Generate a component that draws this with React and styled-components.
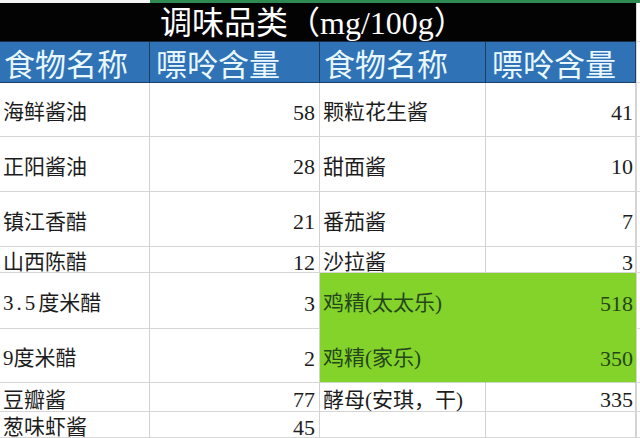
import React from "react";
import styled, { createGlobalStyle, css } from "styled-components";

const Global = createGlobalStyle`
  html, body { margin: 0; padding: 0; background: #fff; overflow: hidden; }
  body { width: 640px; height: 438px; }
`;

const GREEN = "#83d32b";

const rows = [
  { h: 54, a: ["海鲜酱油", "58"], b: ["颗粒花生酱", "41"] },
  { h: 55, a: ["正阳酱油", "28"], b: ["甜面酱", "10"] },
  { h: 55, a: ["镇江香醋", "21"], b: ["番茄酱", "7"] },
  { h: 26, a: ["山西陈醋", "12"], b: ["沙拉酱", "3"] },
  { h: 56, a: ["3.5度米醋", "3"], b: ["鸡精(太太乐)", "518"], green: true },
  { h: 54, a: ["9度米醋", "2"], b: ["鸡精(家乐)", "350"], green: true },
  { h: 29, a: ["豆瓣酱", "77"], b: ["酵母(安琪，干)", "335"] },
  { h: 26, a: ["葱味虾酱", "45"], b: ["", ""] },
];

const Sheet = styled.div`
  display: grid;
  grid-template-columns: 150px 170px 166px 150px 1fr;
  grid-template-rows: 3px 39px 41px ${(p) => p.$rows};
  width: 640px;
  height: 438px;
  overflow: hidden;
  background: #fff;
`;

const TopStrip = styled.div`
  grid-column: ${(p) => p.$span};
  background: ${(p) => (p.$green ? "#2f8a52" : "#f4f4f4")};
`;

const TitleBar = styled.div`
  grid-column: 1 / 5;
  background: #030303;
  border-bottom: 1px solid #1b2d44;
  box-sizing: border-box;
  display: flex;
  align-items: center;
  padding: 1px 0 0 160px;
  color: #ffffff;
  font-family: "Liberation Serif", "Noto Sans CJK SC", serif;
  font-size: 32px;
  line-height: 1;
  white-space: nowrap;
`;

const SpareCell = styled.div`
  box-sizing: border-box;
  border-left: 1px solid #d6d6d6;
  border-bottom: 1px solid #dcdcdc;
  background: #fff;
`;

const HeadCell = styled.div`
  box-sizing: border-box;
  background: #2f73b6;
  border-right: 1px solid #1d3f66;
  border-bottom: 1px solid #1d3f66;
  display: flex;
  align-items: center;
  padding: 2px 0 0 ${(p) => p.$pad}px;
  color: #e9f7ff;
  font-family: "Noto Sans CJK SC", sans-serif;
  font-size: 31px;
  line-height: 34px;
  white-space: nowrap;
`;

const Cell = styled.div`
  box-sizing: border-box;
  display: flex;
  align-items: center;
  padding-top: 6px;
  line-height: 1;
  font-size: 21px;
  white-space: nowrap;
  color: #1c1c1c;
  background: #fff;
  border-right: 1px solid #d2d2d2;
  border-bottom: 1px solid #d6d6d6;
  ${(p) =>
    p.$num
      ? css`
          justify-content: flex-end;
          padding-right: ${p.$padR}px;
          font-family: "Liberation Serif", serif;
          font-size: 22px;
        `
      : css`
          justify-content: flex-start;
          padding-left: 3px;
          font-family: "Liberation Serif", "Noto Sans CJK SC", serif;
        `}
  ${(p) =>
    p.$green &&
    css`
      background: ${GREEN};
      border-right-color: ${GREEN};
      border-bottom-color: ${GREEN};
      color: #24461a;
    `}
  ${(p) =>
    p.$greenEnd &&
    css`
      border-bottom-color: #cfd8c8;
    `}
`;

const Wide = styled.span`
  letter-spacing: 3px;
`;

function Name({ text }) {
  const m = /^([0-9]+\.[0-9]+)(.*)$/.exec(text);
  if (!m) return text;
  return (
    <>
      <Wide>{m[1]}</Wide>
      {m[2]}
    </>
  );
}

export default function App() {
  const template = rows.map((r) => `${r.h}px`).join(" ");
  return (
    <>
      <Global />
      <Sheet $rows={template}>
        <TopStrip $span="1 / 2" />
        <TopStrip $span="2 / 6" $green />

        <TitleBar>调味品类（mg/100g）</TitleBar>
        <SpareCell />

        <HeadCell $pad={4}>食物名称</HeadCell>
        <HeadCell $pad={6}>嘌呤含量</HeadCell>
        <HeadCell $pad={4}>食物名称</HeadCell>
        <HeadCell $pad={6}>嘌呤含量</HeadCell>
        <SpareCell />

        {rows.map((r, i) => {
          const isLastGreen = r.green && !(rows[i + 1] && rows[i + 1].green);
          return (
            <React.Fragment key={i}>
              <Cell>
                <Name text={r.a[0]} />
              </Cell>
              <Cell $num $padR={4}>{r.a[1]}</Cell>
              <Cell $green={r.green} $greenEnd={isLastGreen}>{r.b[0]}</Cell>
              <Cell $num $padR={2} $green={r.green} $greenEnd={isLastGreen}>
                {r.b[1]}
              </Cell>
              <SpareCell />
            </React.Fragment>
          );
        })}
      </Sheet>
    </>
  );
}
